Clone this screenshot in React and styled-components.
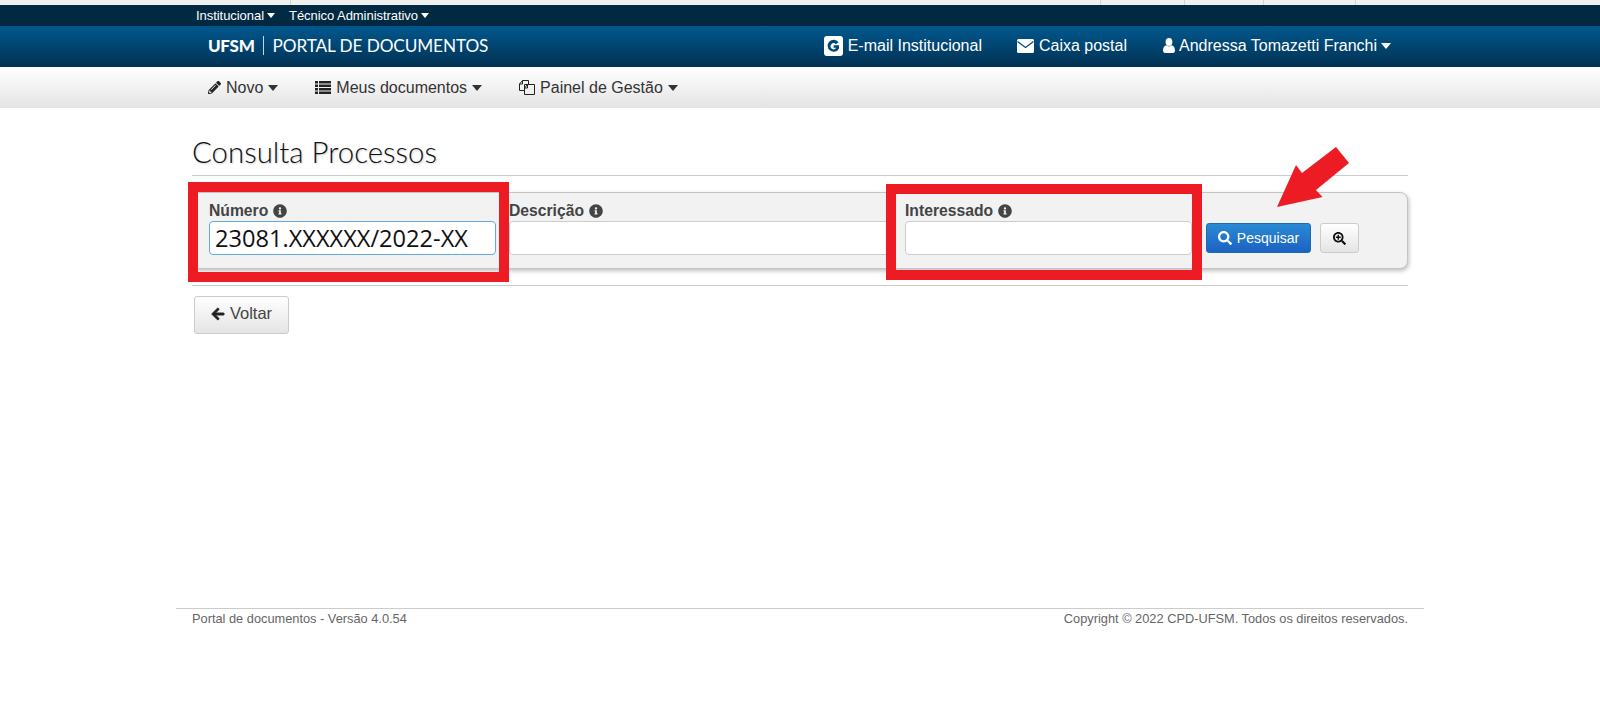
import styled, { createGlobalStyle } from 'styled-components';
import {
  FaArrowLeft,
  FaInfoCircle,
  FaPencilAlt,
  FaSearch,
  FaSearchPlus,
} from 'react-icons/fa';

const GlobalStyle = createGlobalStyle`
  html, body {
    margin: 0;
    padding: 0;
    background: #fff;
    font-family: "Liberation Sans", Arial, sans-serif;
  }
`;

const tabs = [290, 1100, 1184, 1263, 1355];

const App = () => {
  return (
    <Page>
      <GlobalStyle />
      <BrowserStrip>
        {tabs.map((x) => (
          <TabLine key={x} style={{ left: x }} />
        ))}
      </BrowserStrip>

      <TopBar>
        <TopLink>Institucional<Caret $size={4} /></TopLink>
        <TopLink>Técnico Administrativo<Caret $size={4} /></TopLink>
      </TopBar>

      <Header>
        <Logo>
          <LogoMark>UFSM</LogoMark>
          <LogoName>PORTAL DE DOCUMENTOS</LogoName>
        </Logo>
        <HeaderLinks>
          <HeaderLink>
            <IconSvg width="19" height="20" viewBox="0 0 19 20">
              <rect width="19" height="20" rx="3" fill="#fff" />
              <path d="M14.5 6.2A6 6 0 1 0 15 12.4V9.2H9.6v2.6h2.6a3 3 0 1 1-.4-3.6z" fill="#02477a" />
            </IconSvg>
            E-mail Institucional
          </HeaderLink>
          <HeaderLink>
            <IconSvg width="17" height="14" viewBox="0 0 17 14">
              <rect width="17" height="14" rx="1.5" fill="#fff" />
              <path d="M0.5 2.5 L8.5 8.5 L16.5 2.5" fill="none" stroke="#02477a" strokeWidth="1.2" />
            </IconSvg>
            Caixa postal
          </HeaderLink>
          <HeaderLink $tight>
            <IconSvg width="12" height="15" viewBox="0 0 12 15">
              <ellipse cx="6" cy="4" rx="3.4" ry="4" fill="#fff" />
              <path d="M0 12.5C0 9.5 1.5 7.6 3.4 7.3 4 8 5 8.4 6 8.4S8 8 8.6 7.3C10.5 7.6 12 9.5 12 12.5 12 14 11 15 10 15H2C1 15 0 14 0 12.5z" fill="#fff" />
            </IconSvg>
            Andressa Tomazetti Franchi<Caret $size={5} />
          </HeaderLink>
        </HeaderLinks>
      </Header>

      <SubNav>
        <SubNavItem><FaPencilAlt size={13} />Novo<Caret $size={5} /></SubNavItem>
        <SubNavItem>
          <IconSvg width="16" height="13" viewBox="0 0 16 13">
            <path d="M0 0h3v2.5H0zM4 0h12v2.5H4zM0 3.5h3V6H0zM4 3.5h12V6H4zM0 7h3v2.5H0zM4 7h12v2.5H4zM0 10.5h3V13H0zM4 10.5h12V13H4z" fill="#222" />
          </IconSvg>
          Meus documentos<Caret $size={5} />
        </SubNavItem>
        <SubNavItem>
          <IconSvg width="16" height="15" viewBox="0 0 16 15">
            <path d="M5.5 10.5H0.5V4L3.5 0.5H9.5V4.5M3.5 0.5V4H0.5" fill="none" stroke="#222" />
            <path d="M5.5 4.5H15.5V14.5H5.5zM5.5 8L8.5 4.5V8z" fill="none" stroke="#222" />
          </IconSvg>
          Painel de Gestão<Caret $size={5} />
        </SubNavItem>
      </SubNav>

      <Main>
        <Title>Consulta Processos</Title>
        <SearchPanel>
          <Field>
            <FieldLabel>Número<FaInfoCircle size={14} /></FieldLabel>
            <TextInput $focused readOnly value="23081.XXXXXX/2022-XX" />
          </Field>
          <Field>
            <FieldLabel>Descrição<FaInfoCircle size={14} /></FieldLabel>
            <TextInput readOnly value="" />
          </Field>
          <Field>
            <FieldLabel>Interessado<FaInfoCircle size={14} /></FieldLabel>
            <TextInput readOnly value="" />
          </Field>
          <SearchButton><FaSearch size={14} />Pesquisar</SearchButton>
          <ZoomButton><FaSearchPlus size={13} /></ZoomButton>
        </SearchPanel>
        <Divider />
        <BackButton><FaArrowLeft size={14} />Voltar</BackButton>
      </Main>

      <Footer>
        <span>Portal de documentos - Versão 4.0.54</span>
        <span>Copyright © 2022 CPD-UFSM. Todos os direitos reservados.</span>
      </Footer>

      <RedBoxOne />
      <RedBoxTwo />
      <Arrow viewBox="0 0 72 60">
        <polygon points="0,60 19,18 25,26 59,0 72,16 39,43 45.5,50" fill="#ed1c24" />
      </Arrow>
    </Page>
  );
};

export default App;

const Page = styled.div`
  position: relative;
  height: 716px;
  overflow: hidden;
`;

const BrowserStrip = styled.div`
  position: relative;
  height: 5px;
  background: #f0f0f0;
`;

const TabLine = styled.i`
  position: absolute;
  top: 0;
  width: 1px;
  height: 5px;
  background: #d4d4d4;
`;

const Caret = styled.i`
  display: inline-block;
  width: 0;
  height: 0;
  border-style: solid;
  border-color: currentColor transparent transparent;
  border-width: ${(props) => props.$size + 1}px ${(props) => props.$size + 0.5}px 0;
`;

const IconSvg = styled.svg`
  flex: none;
`;

const TopBar = styled.div`
  display: flex;
  align-items: center;
  gap: 14px;
  height: 21px;
  padding-left: 196px;
  background: #012942;
`;

const TopLink = styled.a`
  display: flex;
  align-items: center;
  gap: 3px;
  color: #fff;
  font-size: 13px;
  letter-spacing: -0.05px;
  white-space: pre;
`;

const Header = styled.div`
  display: flex;
  align-items: center;
  justify-content: space-between;
  height: 41px;
  padding: 0 209px 2px 208px;
  box-sizing: border-box;
  background: linear-gradient(to bottom, #00588e, #023153);
`;

const Logo = styled.div`
  display: flex;
  align-items: center;
  color: #fff;
  margin-top: -1px;
`;

const LogoMark = styled.span`
  font-family: "Lato", sans-serif;
  font-size: 17px;
  font-weight: 900;
  letter-spacing: -0.3px;
  padding-right: 8px;
  border-right: 1px solid #c4d5e2;
  line-height: 19px;
`;

const LogoName = styled.span`
  font-family: "Lato", sans-serif;
  font-size: 17.2px;
  padding-left: 9px;
  letter-spacing: -0.1px;
`;

const HeaderLinks = styled.div`
  display: flex;
  align-items: center;
  gap: 36px;
`;

const HeaderLink = styled.a`
  display: flex;
  align-items: center;
  gap: ${(props) => (props.$tight ? '4px' : '5px')};
  color: #fff;
  font-size: 16px;
  white-space: pre;

  &:first-child {
    margin-right: -1px;
  }
`;

const SubNav = styled.div`
  display: flex;
  align-items: center;
  gap: 37px;
  height: 41px;
  padding-left: 208px;
  background: linear-gradient(to bottom, #fff, #e4e4e4);
`;

const SubNavItem = styled.a`
  display: flex;
  align-items: center;
  gap: 5px;
  color: #333;
  font-size: 16px;
  white-space: pre;

  svg {
    color: #222;
  }
`;

const Main = styled.div`
  width: 1216px;
  margin-left: 192px;
`;

const Title = styled.h1`
  margin: 0 0 16px;
  height: 68px;
  box-sizing: border-box;
  padding-top: 25px;
  border-bottom: 1px solid #ccc;
  font-family: "Lato", sans-serif;
  font-size: 29.4px;
  font-weight: 300;
  line-height: 38px;
  color: #111;
  text-shadow: 1px 1px 2px rgba(0, 0, 0, 0.2);
`;

const SearchPanel = styled.div`
  display: flex;
  height: 77px;
  box-sizing: border-box;
  padding: 7px 0 0 16px;
  background: #f2f2f2;
  border: 1px solid #c4c4c4;
  border-radius: 8px;
  box-shadow: 1px 2px 4px rgba(0, 0, 0, 0.25);
`;

const Field = styled.div`
  display: flex;
  flex-direction: column;
  flex: none;
  margin-right: 13px;

  &:nth-child(1) {
    width: 287px;
  }

  &:nth-child(2) {
    width: 383px;
  }

  &:nth-child(3) {
    width: 287px;
  }
`;

const FieldLabel = styled.label`
  display: flex;
  align-items: center;
  gap: 5px;
  height: 21px;
  color: #444;
  font-size: 15.7px;
  font-weight: 700;
  white-space: pre;
`;

const TextInput = styled.input`
  box-sizing: border-box;
  width: 100%;
  height: 34px;
  padding: 0 5px;
  border: 1px solid ${(props) => (props.$focused ? '#66a8e0' : '#ccc')};
  border-radius: 4px;
  background: #fff;
  outline: none;
  color: #111;
  font-family: "Open Sans", sans-serif;
  font-size: 23.6px;
`;

const SearchButton = styled.button`
  display: flex;
  align-items: center;
  justify-content: center;
  flex: none;
  gap: 5px;
  width: 105px;
  height: 30px;
  margin: 23px 9px 0 1px;
  padding: 0 0 1px;
  border: 1px solid #1b6cb5;
  border-radius: 3px;
  background: linear-gradient(to bottom, #2a8ad4, #1c62c4);
  color: #fff;
  font-family: "Liberation Sans", sans-serif;
  font-size: 14px;
`;

const ZoomButton = styled.button`
  display: flex;
  align-items: center;
  justify-content: center;
  flex: none;
  width: 39px;
  height: 30px;
  margin-top: 23px;
  padding: 0;
  border: 1px solid #ccc;
  border-radius: 3px;
  background: linear-gradient(to bottom, #fff, #e4e4e4);
  color: #111;
`;

const Divider = styled.hr`
  margin: 16px 0 10px;
  border: 0;
  border-top: 1px solid #ccc;
`;

const BackButton = styled.button`
  display: flex;
  align-items: center;
  justify-content: center;
  gap: 5px;
  width: 95px;
  height: 38px;
  margin-left: 2px;
  padding: 0 0 3px;
  border: 1px solid #ccc;
  border-radius: 3px;
  background: linear-gradient(to bottom, #fff, #e4e4e4);
  color: #444;
  font-family: "Liberation Sans", sans-serif;
  font-size: 16.5px;

  svg {
    color: #222;
    stroke: #222;
    stroke-width: 30px;
  }
`;

const Footer = styled.div`
  position: absolute;
  top: 608px;
  left: 176px;
  width: 1248px;
  box-sizing: border-box;
  display: flex;
  justify-content: space-between;
  padding: 1px 16px 0;
  border-top: 1px solid #ccc;
  color: #666;
  font-size: 12.8px;
  line-height: 17px;
`;

const RedBox = styled.div`
  position: absolute;
  box-sizing: border-box;
  border: 10px solid #ed1c24;
`;

const RedBoxOne = styled(RedBox)`
  left: 188px;
  top: 182px;
  width: 321px;
  height: 100px;
`;

const RedBoxTwo = styled(RedBox)`
  left: 886px;
  top: 184px;
  width: 316px;
  height: 96px;
`;

const Arrow = styled.svg`
  position: absolute;
  left: 1277px;
  top: 147px;
  width: 72px;
  height: 60px;
`;
